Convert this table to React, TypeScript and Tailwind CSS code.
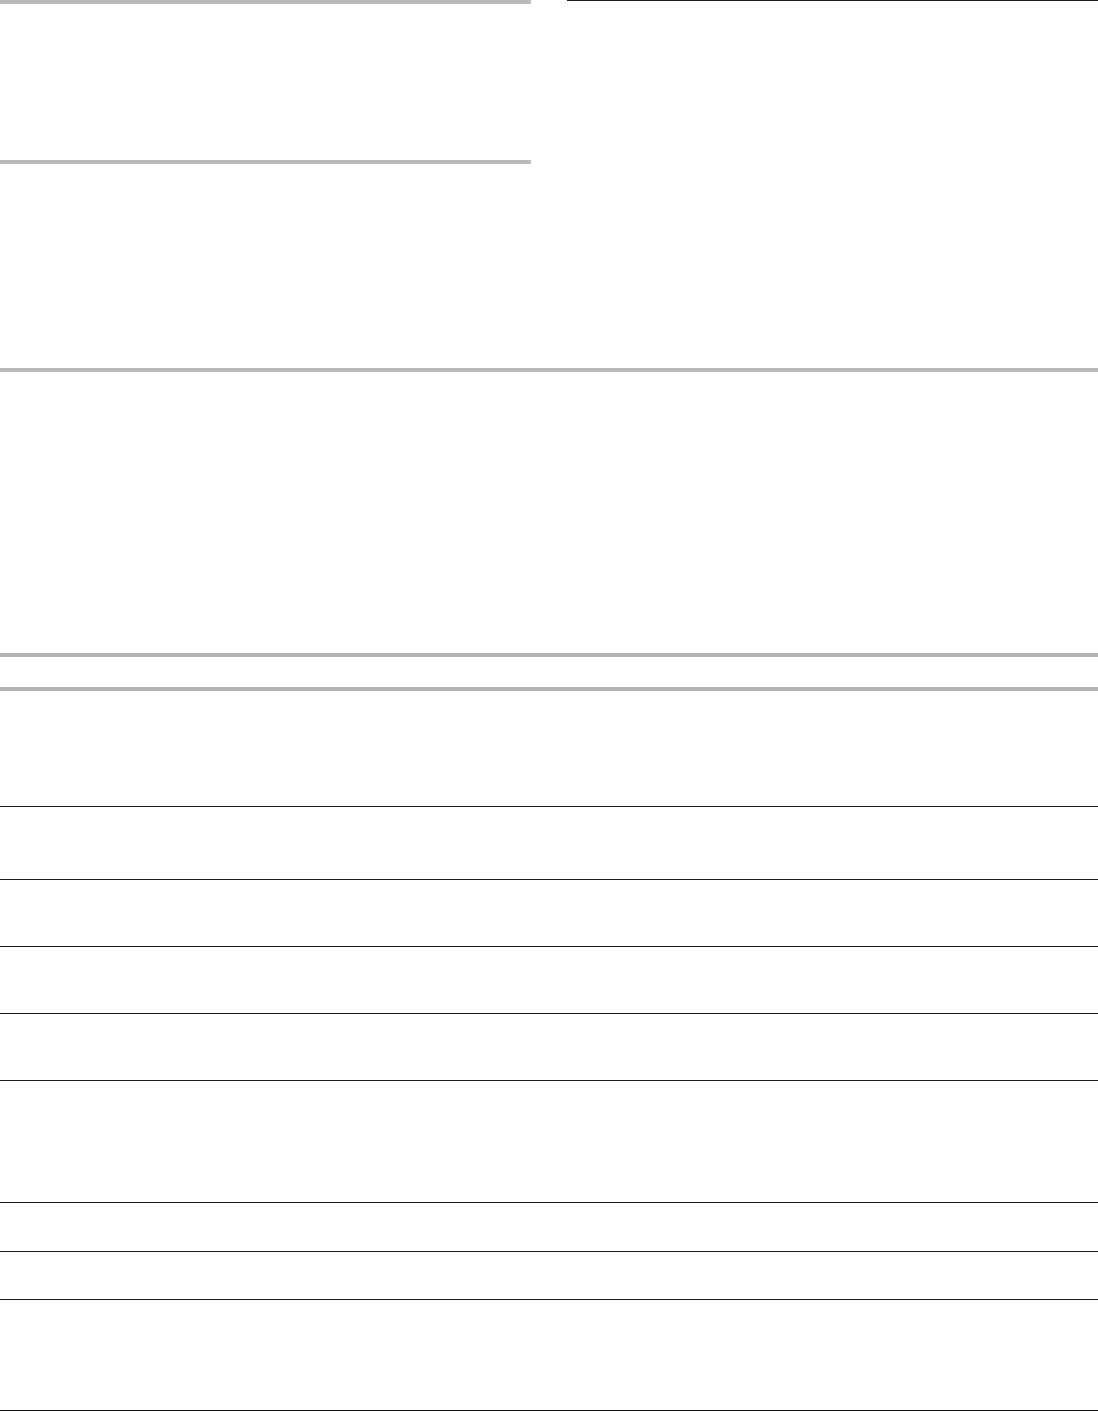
import React from "react";

const rows = [73, 67, 67, 67, 122, 49, 48, 111];

const App = () => {
  return (
    <div className="w-[1098px] bg-white font-['Liberation_Sans',sans-serif]">
      {/* top two columns */}
      <div className="grid grid-cols-[531px_531px] gap-x-[36px]">
        <div className="flex flex-col">
          <div className="h-[160px] border-t-4 border-[#bbbbbb]" />
          <div className="h-[208px] border-t-4 border-[#bbbbbb]" />
        </div>
        <div className="h-[368px] border-t border-[#1a1a1a]" />
      </div>

      <div className="h-[285px] border-t-4 border-[#bbbbbb]" />
      <div className="h-[34px] border-t-4 border-[#b4b4b4]" />
      <div className="h-[119px] border-t-4 border-[#b4b4b4]" />

      {rows.map((h, i) => (
        <div
          key={i}
          className="border-t border-[#1a1a1a]"
          style={{ height: h }}
        />
      ))}
      <div className="h-px bg-[#1a1a1a]" />
    </div>
  );
};

export default App;
